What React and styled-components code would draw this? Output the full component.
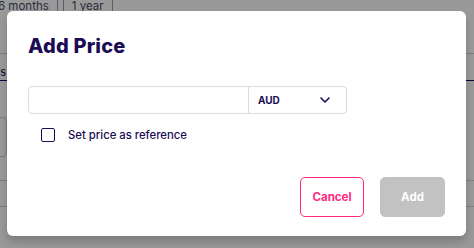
import React from 'react'
import styled, { createGlobalStyle } from 'styled-components'

const GlobalStyle = createGlobalStyle`
   html, body {
      margin: 0;
      padding: 0;
      width: 474px;
      height: 248px;
      overflow: hidden;
      background: #fff;
      font-family: Inter, 'Liberation Sans', sans-serif;
   }
`

const navy = '#1c0c55'
const pink = '#ff2a7f'

const Page = styled.div`
   position: relative;
   width: 474px;
   height: 248px;
   overflow: hidden;
`
const Backdrop = styled.div`
   display: flex;
   flex-direction: column;
`
const TabRow = styled.div`
   display: flex;
   gap: 5px;
   height: 14px;
   margin-left: -2px;
`
const PeriodTab = styled.div`
   display: flex;
   align-items: flex-end;
   padding: 0 8px 2px 8px;
   border-right: 1px solid #9a9ab0;
   border-left: ${({ first }) => (first ? 'none' : '1px solid #9a9ab0')};
   font-size: 11.5px;
   color: #4a4a6a;
   line-height: 1;
   padding-left: ${({ first }) => (first ? '0' : '8px')};
`
const Rule = styled.div`
   height: 1px;
   background: ${({ dark }) => (dark ? navy : '#d0d0d8')};
   margin-top: ${({ top }) => top}px;
`
const UnitTab = styled.div`
   margin-top: 13px;
   margin-left: -20px;
   font-size: 11px;
   color: ${navy};
   line-height: 1;
`
const GhostBox = styled.div`
   margin-top: 36px;
   margin-left: -40px;
   width: 45px;
   height: 38px;
   border: 1px solid #ccc;
   border-radius: 4px;
`

const Overlay = styled.div`
   position: absolute;
   inset: 0;
   background: rgba(0, 0, 0, 0.4);
   display: flex;
   justify-content: flex-start;
   align-items: flex-start;
   padding: 11px 0 0 7px;
`
const Modal = styled.div`
   width: 459px;
   height: 225px;
   box-sizing: border-box;
   background: #fff;
   border-radius: 6px;
   box-shadow: 0 6px 8px rgba(0, 0, 0, 0.18);
   padding: 23px 21px 19px 21px;
   display: flex;
   flex-direction: column;
`
const Title = styled.h2`
   margin: 0;
   font-size: 20px;
   font-weight: 800;
   color: ${navy};
   line-height: 24px;
   letter-spacing: 0.2px;
`
const PriceField = styled.div`
   margin-top: 28px;
   display: flex;
   width: 319px;
   height: 28px;
   box-sizing: border-box;
   border: 1px solid #dcdcdc;
   border-radius: 4px;
`
const Amount = styled.input`
   width: 220px;
   border: none;
   border-right: 1px solid #dcdcdc;
   outline: none;
   padding: 0 8px;
   box-sizing: border-box;
   background: transparent;
`
const Currency = styled.div`
   flex: 1;
   display: flex;
   align-items: center;
   justify-content: space-between;
   padding: 0 16px 0 9px;
   font-size: 10px;
   font-weight: 700;
   color: ${navy};
`
const CheckRow = styled.label`
   margin-top: 14px;
   margin-left: 13px;
   display: flex;
   align-items: center;
   gap: 13px;
   font-size: 11.3px;
   font-weight: 500;
   color: ${navy};
`
const Box = styled.span`
   width: 14px;
   height: 14px;
   box-sizing: border-box;
   border: 1.5px solid ${navy};
   border-radius: 2px;
`
const Actions = styled.div`
   margin-top: auto;
   display: flex;
   justify-content: flex-end;
   gap: 16px;
`
const Button = styled.button`
   width: ${({ w }) => w}px;
   height: 40px;
   box-sizing: border-box;
   border-radius: 5px;
   font-family: inherit;
   font-size: 11.5px;
   font-weight: 700;
   cursor: pointer;
   border: 1.5px solid ${({ variant }) => (variant === 'outline' ? pink : '#c2c2c2')};
   background: ${({ variant }) => (variant === 'outline' ? '#fff' : '#c2c2c2')};
   color: ${({ variant }) => (variant === 'outline' ? pink : '#fff')};
`

const Chevron = () => (
   <svg width="10" height="6" viewBox="0 0 10 6" fill="none">
      <path d="M1 1l4 4 4-4" stroke={navy} strokeWidth="1.6" strokeLinecap="round" strokeLinejoin="round" />
   </svg>
)

export default function App() {
   return (
      <Page>
         <GlobalStyle />
         <Backdrop>
            <TabRow>
               <PeriodTab first>6 months</PeriodTab>
               <PeriodTab>1 year</PeriodTab>
            </TabRow>
            <Rule top={39} />
            <UnitTab>Days</UnitTab>
            <Rule top={2} dark />
            <GhostBox />
            <Rule top={23} />
            <Rule top={25} />
         </Backdrop>
         <Overlay>
            <Modal>
               <Title>Add Price</Title>
               <PriceField>
                  <Amount />
                  <Currency>
                     AUD
                     <Chevron />
                  </Currency>
               </PriceField>
               <CheckRow>
                  <Box />
                  Set price as reference
               </CheckRow>
               <Actions>
                  <Button variant="outline" w={64}>Cancel</Button>
                  <Button w={65}>Add</Button>
               </Actions>
            </Modal>
         </Overlay>
      </Page>
   )
}
